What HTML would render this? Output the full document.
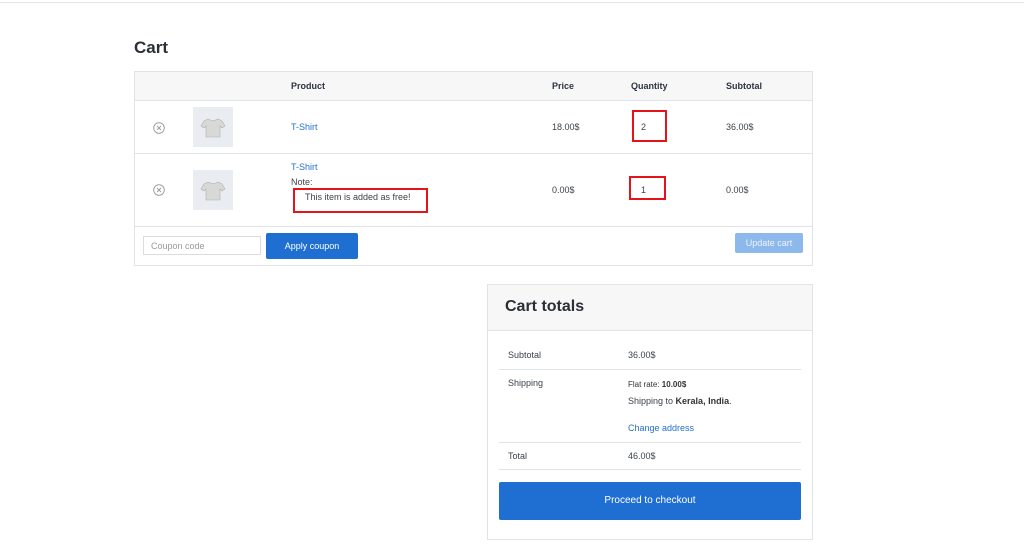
<!DOCTYPE html>
<html><head><style>
*{margin:0;padding:0;box-sizing:border-box}
body{width:1024px;height:560px;background:#fff;font-family:"Liberation Sans",sans-serif;color:#3c434a;position:relative;overflow:hidden;font-size:9px}
.a{position:absolute;white-space:nowrap}
.b{color:#2271d1}
.h{font-weight:bold;color:#2e3440}
.red{position:absolute;border:2px solid #e5141b}
.shirt{position:absolute;width:40px;height:40px;background:#e9edf1}
.line{position:absolute;height:1px;background:#e0e3e8}
</style></head><body>
<div class="line" style="left:0;top:2px;width:1024px;background:#e6e6e6"></div>
<div class="a" style="left:134px;top:38px;font-size:17px;font-weight:bold;color:#2b2f36">Cart</div>
<div style="position:absolute;left:134px;top:71px;width:679px;height:195px;border:1px solid #e0e3e8"></div>
<div style="position:absolute;left:135px;top:72px;width:677px;height:28px;background:#f7f7f8"></div>
<div class="line" style="left:134px;top:100px;width:679px"></div>
<div class="line" style="left:134px;top:153px;width:679px"></div>
<div class="line" style="left:134px;top:226px;width:679px"></div>
<div class="a h" style="left:291px;top:81px">Product</div>
<div class="a h" style="left:552px;top:81px">Price</div>
<div class="a h" style="left:631px;top:81px">Quantity</div>
<div class="a h" style="left:726px;top:81px">Subtotal</div>
<svg class="a" style="left:153px;top:122px" width="12" height="12"><circle cx="6" cy="6" r="5.3" fill="none" stroke="#999" stroke-width="0.9"/><path d="M4 4L8 8M8 4L4 8" stroke="#999" stroke-width="0.9"/></svg>
<svg class="a" style="left:153px;top:184px" width="12" height="12"><circle cx="6" cy="6" r="5.3" fill="none" stroke="#999" stroke-width="0.9"/><path d="M4 4L8 8M8 4L4 8" stroke="#999" stroke-width="0.9"/></svg>
<div class="shirt" style="left:193px;top:107px"><svg width="40" height="40"><path d="M15 12L11 14L8 19L11 21L13 19L13 30L27 30L27 19L29 21L32 19L29 14L25 12Q20 15 15 12Z" fill="#d8d8d6" stroke="#b0b0ae" stroke-width="0.6"/></svg></div>
<div class="shirt" style="left:193px;top:170px"><svg width="40" height="40"><path d="M15 12L11 14L8 19L11 21L13 19L13 30L27 30L27 19L29 21L32 19L29 14L25 12Q20 15 15 12Z" fill="#d8d8d6" stroke="#b0b0ae" stroke-width="0.6"/></svg></div>
<div class="a b" style="left:291px;top:122px">T-Shirt</div>
<div class="a b" style="left:291px;top:162px">T-Shirt</div>
<div class="a" style="left:291px;top:177px">Note:</div>
<div class="red" style="left:293px;top:188px;width:135px;height:25px"></div>
<div class="a" style="left:305px;top:192px">This item is added as free!</div>
<div class="a" style="left:552px;top:122px">18.00$</div>
<div class="a" style="left:552px;top:185px">0.00$</div>
<div class="a" style="left:726px;top:122px">36.00$</div>
<div class="a" style="left:726px;top:185px">0.00$</div>
<div class="red" style="left:632px;top:110px;width:35px;height:32px"></div>
<div class="a" style="left:641px;top:122px">2</div>
<div class="red" style="left:629px;top:176px;width:37px;height:24px"></div>
<div class="a" style="left:641px;top:185px">1</div>
<div style="position:absolute;left:143px;top:236px;width:118px;height:19px;border:1px solid #dcdcdc"></div>
<div class="a" style="left:151px;top:241px;color:#9a9a9a">Coupon code</div>
<div style="position:absolute;left:266px;top:233px;width:92px;height:26px;background:#1f6fd2;border-radius:2px;color:#fff;text-align:center;line-height:26px">Apply coupon</div>
<div style="position:absolute;left:735px;top:233px;width:68px;height:20px;background:#8db8ec;border-radius:2px;color:#eef4fc;text-align:center;line-height:20px">Update cart</div>

<div style="position:absolute;left:487px;top:284px;width:326px;height:256px;border:1px solid #e0e3e8"></div>
<div style="position:absolute;left:488px;top:285px;width:324px;height:46px;background:#f7f7f8;border-bottom:1px solid #e0e3e8"></div>
<div class="a" style="left:505px;top:298px;font-size:16px;font-weight:bold;color:#2b2f36">Cart totals</div>
<div class="a" style="left:508px;top:350px">Subtotal</div>
<div class="a" style="left:628px;top:350px">36.00$</div>
<div class="line" style="left:499px;top:369px;width:302px"></div>
<div class="a" style="left:508px;top:378px">Shipping</div>
<div class="a" style="left:628px;top:380px;font-size:8px;color:#333">Flat rate: <b>10.00$</b></div>
<div class="a" style="left:628px;top:396px">Shipping to <b style="color:#333">Kerala, India</b>.</div>
<div class="a b" style="left:628px;top:423px">Change address</div>
<div class="line" style="left:499px;top:442px;width:302px"></div>
<div class="a" style="left:508px;top:451px">Total</div>
<div class="a" style="left:628px;top:451px">46.00$</div>
<div class="line" style="left:499px;top:469px;width:302px"></div>
<div style="position:absolute;left:499px;top:482px;width:302px;height:38px;background:#1f6fd2;border-radius:2px;color:#fff;text-align:center;line-height:38px;font-size:10px">Proceed to checkout</div>
</body></html>
